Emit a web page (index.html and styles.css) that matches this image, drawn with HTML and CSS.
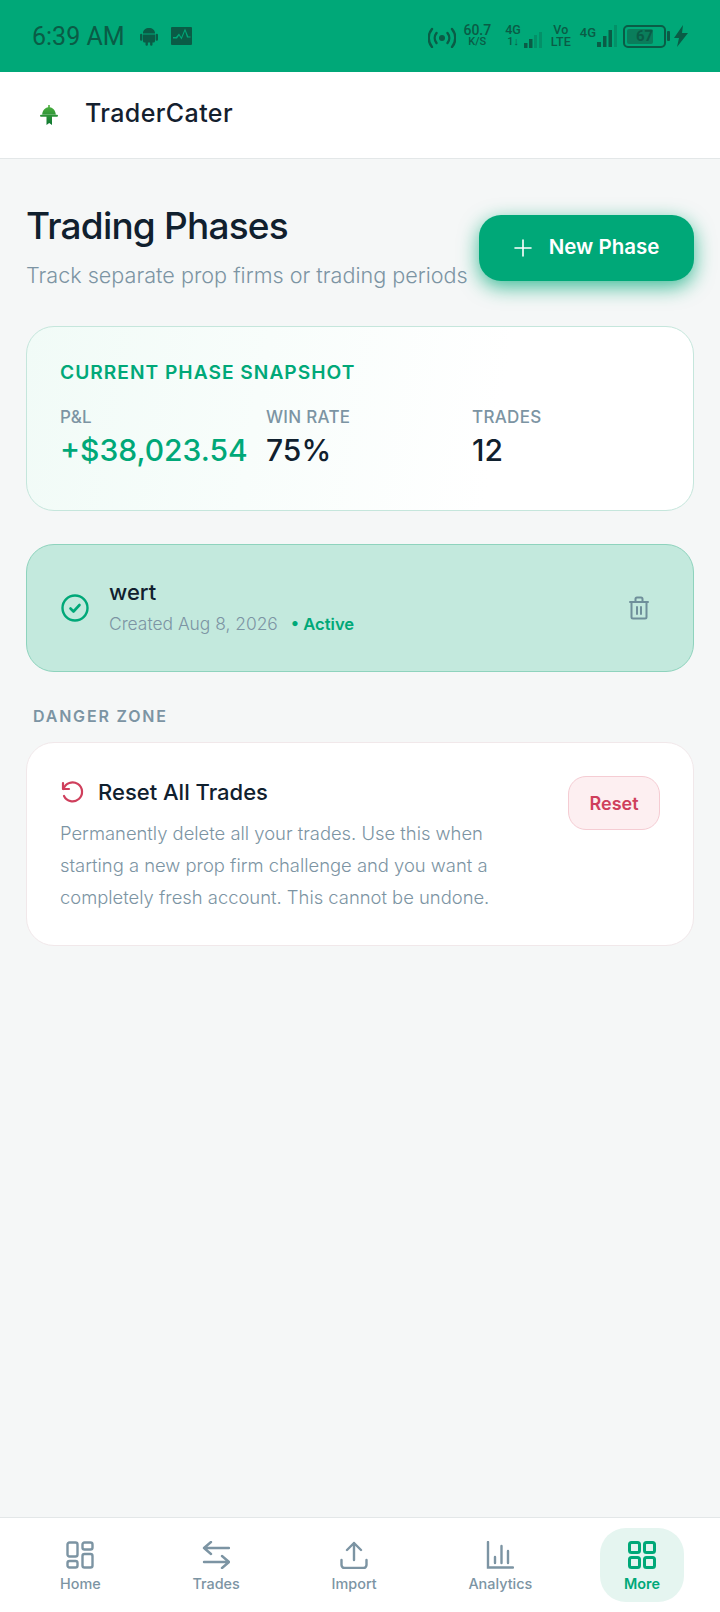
FILE: index.html
```html
<!DOCTYPE html>
<html lang="en">
<head>
    <meta charset="UTF-8">
    <meta name="viewport" content="width=device-width, initial-scale=1.0">
    <title>TraderCater - Trading Phases</title>
    <link rel="stylesheet" href="styles.css">
</head>
<body>

<div class="statusbar">
    <div class="status-left">
        <span class="clock">6:39 AM</span>
        <svg class="android" width="18" height="19" viewBox="0 0 18 19"><path fill="currentColor" d="M3 6C3 3 5.700 1 9 1s6 2 6 5v.5H3zM3 7.500h12v6.500c0 .8-.6 1.500-1.400 1.500H12.500v2a1.200 1.200 0 0 1-2.400 0v-2H7.900v2a1.200 1.200 0 0 1-2.400 0v-2H4.400C3.600 15.500 3 14.800 3 14zM0 8a1.200 1.200 0 0 1 2.400 0v4.500a1.200 1.200 0 0 1-2.400 0zM15.600 8a1.200 1.200 0 0 1 2.400 0v4.500a1.200 1.200 0 0 1-2.400 0z"/></svg>
        <svg class="pulse" width="21" height="18" viewBox="0 0 21 18"><path fill="currentColor" fill-rule="evenodd" d="M1 0h19a1 1 0 0 1 1 1v16a1 1 0 0 1-1 1H1a1 1 0 0 1-1-1V1a1 1 0 0 1 1-1zM2 11.500h4l2-3 2.500 4 3.500-8.500 2 6.500h3.500V9.500h-2.200L14 1.500l-3.700 8.800L8 6.500l-3 3.500H2z"/></svg>
    </div>
    <div class="status-right">
        <svg width="28" height="24" viewBox="0 0 28 24" fill="none" stroke="currentColor" stroke-width="2.400" stroke-linecap="round"><circle cx="14" cy="14" r="3" fill="currentColor" stroke="none"/><path d="M8.500 9a8 8 0 0 0 0 10M19.500 9a8 8 0 0 1 0 10M4 5a14 14 0 0 0 0 18M24 5a14 14 0 0 1 0 18"/></svg>
        <div class="stack speed"><span>60.7</span><span class="small">K/S</span></div>
        <div class="signal-group first">
            <div class="stack"><span>4G</span><span class="small">1↓</span></div>
            <svg width="18" height="16" viewBox="0 0 18 16"><g fill="currentColor"><rect x="0" y="11" width="3.500" height="5"/><rect x="5" y="7" width="3.500" height="9"/></g><g fill="currentColor" opacity=".3"><rect x="10" y="3" width="3" height="13"/><rect x="15" y="0" width="3" height="16"/></g></svg>
        </div>
        <div class="stack"><span>Vo</span><span>LTE</span></div>
        <div class="signal-group tight">
            <span class="four-g">4G</span>
            <svg width="20" height="22" viewBox="0 0 20 22"><g fill="currentColor"><rect x="0" y="17" width="4" height="5"/><rect x="6" y="11" width="3.500" height="11"/><rect x="11.500" y="5" width="3.500" height="17"/></g><rect x="17" y="0" width="3" height="22" fill="currentColor" opacity=".3"/></svg>
        </div>
        <div class="battery">
            <div class="battery-body"><span class="battery-fill"></span><span class="battery-num">67</span></div>
            <span class="battery-tip"></span>
        </div>
        <svg class="bolt" width="14" height="22" viewBox="0 0 14 22"><path fill="currentColor" d="M9 0 0 13h5l-2 9 11-14H8z"/></svg>
    </div>
</div>

<header class="topbar">
    <div class="logo">
        <svg width="18" height="20" viewBox="0 0 18 20">
            <defs><linearGradient id="bell" x1="0" y1="0" x2="0" y2="1"><stop offset="0" stop-color="#4fb33f"/><stop offset="1" stop-color="#0c7530"/></linearGradient></defs>
            <path fill="url(#bell)" d="M8.200 0h1.600v2.200C13 2.700 15.500 5.500 15.800 9.500H2.200C2.500 5.500 5 2.700 8.200 2.200zM1 9.800h16a1 1 0 0 1 0 2H12v8.200l-2.800-2L6.500 20v-8.200H1a1 1 0 0 1 0-2z"/>
        </svg>
    </div>
    <span class="brand">TraderCater</span>
</header>

<main class="content">
    <div class="page-head">
        <div>
            <h1>Trading Phases</h1>
            <p class="subtitle">Track separate prop firms or trading periods</p>
        </div>
        <button class="new-btn" type="button">
            <svg width="18" height="18" viewBox="0 0 18 18" fill="none" stroke="#fff" stroke-width="1.600" stroke-linecap="round"><path d="M9 1v16M1 9h16"/></svg>
            <span class="new-label">New Phase</span>
        </button>
    </div>

    <section class="snapshot">
        <h2>CURRENT PHASE SNAPSHOT</h2>
        <div class="stats">
            <div>
                <div class="stat-label">P&amp;L</div>
                <div class="stat-value green">+$38,023.54</div>
            </div>
            <div>
                <div class="stat-label">WIN RATE</div>
                <div class="stat-value">75%</div>
            </div>
            <div>
                <div class="stat-label">TRADES</div>
                <div class="stat-value">12</div>
            </div>
        </div>
    </section>

    <section class="phase">
        <svg width="28" height="28" viewBox="0 0 28 28" fill="none" stroke="#00a878" stroke-linecap="round" stroke-linejoin="round"><circle cx="14" cy="14" r="12.500" stroke-width="2.400"/><path d="M9.500 14.500l3 3 6-6.500" stroke-width="2.600"/></svg>
        <div class="phase-info">
            <div class="phase-name">wert</div>
            <div class="phase-meta">Created Aug 8, 2026 <span class="active">• Active</span></div>
        </div>
        <svg class="trash" width="20" height="24" viewBox="0 0 20 24" fill="none" stroke="#6f8f9a" stroke-width="2" stroke-linecap="round" stroke-linejoin="round"><path d="M1 6h18M6.500 6V3A1.500 1.500 0 0 1 8 1.500h4A1.500 1.500 0 0 1 13.500 3v3M2.500 6v15A1.500 1.500 0 0 0 4 22.500h12a1.500 1.500 0 0 0 1.500-1.500V6M8 11v7M12 11v7"/></svg>
    </section>

    <div class="section-label">DANGER ZONE</div>

    <section class="danger">
        <div class="danger-text">
            <div class="danger-title">
                <svg width="24" height="24" viewBox="0 0 24 24" fill="none" stroke="#cf3f5c" stroke-width="2.200" stroke-linecap="round" stroke-linejoin="round"><path d="M3 3v6h6"/><path d="M3.500 9A9.500 9.500 0 1 1 4 16"/></svg>
                <h3>Reset All Trades</h3>
            </div>
            <p>Permanently delete all your trades. Use this when starting a new prop firm challenge and you want a completely fresh account. This cannot be undone.</p>
        </div>
        <button class="reset-btn" type="button">Reset</button>
    </section>
</main>

<nav class="bottom-nav">
    <div class="nav-item">
        <svg width="28" height="28" viewBox="0 0 28 28" fill="none" stroke="currentColor" stroke-width="2.400" stroke-linejoin="round"><rect x="1.500" y="1.500" width="10" height="14" rx="2"/><rect x="16.500" y="1.500" width="10" height="7" rx="2"/><rect x="1.500" y="20" width="10" height="6.500" rx="2"/><rect x="16.500" y="13" width="10" height="13.500" rx="2"/></svg>
        <span>Home</span>
    </div>
    <div class="nav-item">
        <svg width="28" height="28" viewBox="0 0 28 28" fill="none" stroke="currentColor" stroke-width="2.400" stroke-linecap="round" stroke-linejoin="round"><path d="M27 7H2M9 1 2 7l7 6M2 21h25M20 15l7 6-7 6"/></svg>
        <span>Trades</span>
    </div>
    <div class="nav-item">
        <svg width="28" height="28" viewBox="0 0 28 28" fill="none" stroke="currentColor" stroke-width="2.400" stroke-linecap="round" stroke-linejoin="round"><path d="M14 19V2M7 9l7-7 7 7M1.500 19v5a3 3 0 0 0 3 3h19a3 3 0 0 0 3-3v-5"/></svg>
        <span>Import</span>
    </div>
    <div class="nav-item">
        <svg width="28" height="28" viewBox="0 0 28 28" fill="none" stroke="currentColor" stroke-width="2.400" stroke-linecap="round"><path d="M2 1v25.500h25M9 16v6M15.500 5v17M22 10v12"/></svg>
        <span>Analytics</span>
    </div>
    <div class="nav-item current">
        <svg width="28" height="28" viewBox="0 0 28 28" fill="none" stroke="currentColor" stroke-width="3" stroke-linejoin="round"><rect x="1.500" y="1.500" width="10" height="10" rx="2"/><rect x="16.500" y="1.500" width="10" height="10" rx="2"/><rect x="1.500" y="16.500" width="10" height="10" rx="2"/><rect x="16.500" y="16.500" width="10" height="10" rx="2"/></svg>
        <span>More</span>
    </div>
</nav>

</body>
</html>
```

FILE: styles.css
```css
* {
    box-sizing: border-box;
}

body {
    font-family: Inter, "Noto Sans", sans-serif;
    background-color: #f5f7f7;
    color: #10202e;
    margin: 0;
    width: 720px;
    height: 1612px;
    display: flex;
    flex-direction: column;
    overflow: hidden;
}

.statusbar {
    height: 72px;
    flex-shrink: 0;
    background-color: #00a878;
    color: #0a5c46;
    display: flex;
    justify-content: space-between;
    align-items: center;
    padding: 0 32px;
}

.status-left {
    display: flex;
    align-items: center;
    font-family: Roboto, sans-serif;
}

.clock {
    font-size: 25px;
    width: 108px;
}

.android {
    margin-right: 13px;
}

.status-right {
    display: flex;
    align-items: center;
    gap: 9px;
    font-family: Roboto, sans-serif;
    font-weight: 500;
}

.stack {
    display: flex;
    flex-direction: column;
    align-items: center;
    font-size: 12.500px;
    line-height: 12px;
}

.speed {
    margin-left: -2px;
    margin-right: 1px;
}

.speed span:first-child {
    font-size: 14px;
}

.small {
    font-size: 11px;
}

.signal-group {
    display: flex;
    align-items: flex-end;
    gap: 3px;
}

.signal-group.first {
    margin-left: 4px;
}

.signal-group.tight {
    gap: 1px;
}

.four-g {
    font-size: 13px;
    line-height: 16px;
    align-self: flex-start;
}

.battery {
    display: flex;
    align-items: center;
    gap: 1px;
    margin-left: -3px;
}

.battery-body {
    width: 43px;
    height: 23px;
    border: 2px solid currentColor;
    border-radius: 5px;
    display: flex;
    align-items: center;
    justify-content: center;
    position: relative;
}

.battery-fill {
    position: absolute;
    left: 2px;
    top: 2px;
    bottom: 2px;
    width: 26px;
    background-color: #0a7d5b;
    border-radius: 2px;
}

.battery-num {
    position: relative;
    font-size: 15px;
    font-weight: 700;
}

.battery-tip {
    width: 3px;
    height: 10px;
    background-color: currentColor;
    border-radius: 1px;
}

.bolt {
    margin-left: -5px;
}

.topbar {
    height: 87px;
    flex-shrink: 0;
    background-color: #fff;
    border-bottom: 1px solid #e3e7e8;
    display: flex;
    align-items: center;
    padding: 0 33px 0 40px;
}

.logo {
    width: 45px;
    display: flex;
}

.brand {
    font-size: 25px;
    line-height: 30px;
    font-weight: 500;
    letter-spacing: 0.4px;
    color: #14202e;
    margin-top: -4px;
}

.content {
    flex: 1;
    padding: 44px 26px 0;
}

.page-head {
    display: flex;
    justify-content: space-between;
    align-items: flex-start;
    margin-bottom: 37px;
}

h1 {
    font-size: 37px;
    line-height: 46px;
    font-weight: 500;
    letter-spacing: -0.8px;
    color: #10202e;
    margin: 0;
}

.subtitle {
    font-size: 21.600px;
    line-height: 28px;
    font-weight: 300;
    color: #7c94a3;
    margin: 12px 0 0;
    white-space: nowrap;
}

.new-btn {
    width: 215px;
    height: 66px;
    margin-top: 12px;
    background-color: #00a878;
    color: #fff;
    border: none;
    border-radius: 22px;
    font-family: inherit;
    font-size: 20.500px;
    font-weight: 600;
    display: flex;
    align-items: center;
    justify-content: center;
    gap: 17px;
    box-shadow: 0 6px 20px rgba(0, 168, 120, 0.75);
}

.new-label {
    margin-top: -3px;
}

.snapshot {
    height: 185px;
    border: 1px solid #c5e6dc;
    border-radius: 28px;
    background: linear-gradient(100deg, #f1fbf7, #fff 70%);
    padding: 33px 33px 0;
    margin-bottom: 33px;
}

h2 {
    font-size: 19.200px;
    line-height: 24px;
    font-weight: 600;
    letter-spacing: 1px;
    color: #00a878;
    margin: 0 0 22px;
}

.stats {
    display: grid;
    grid-template-columns: repeat(3, 188px);
    column-gap: 18px;
}

.stat-label {
    font-size: 17px;
    line-height: 22px;
    font-weight: 500;
    letter-spacing: 0.3px;
    color: #7c94a3;
}

.stat-value {
    font-size: 30px;
    line-height: 40px;
    font-weight: 500;
    color: #10202e;
    margin-top: 2px;
    white-space: nowrap;
}

.stat-value.green {
    color: #00a878;
}

.phase {
    height: 128px;
    border: 1px solid #8ed3bd;
    border-radius: 28px;
    background-color: #c3e9dd;
    display: flex;
    align-items: center;
    padding: 0 44px 0 34px;
    margin-bottom: 33px;
}

.phase-info {
    flex: 1;
    margin-left: 20px;
}

.phase-name {
    font-size: 22px;
    line-height: 30px;
    font-weight: 500;
    color: #10202e;
    margin-top: -4px;
    margin-bottom: 5px;
}

.phase-meta {
    font-size: 17.400px;
    line-height: 24px;
    font-weight: 300;
    color: #7c94a3;
}

.active {
    color: #00a878;
    font-size: 16.600px;
    font-weight: 600;
    margin-left: 8px;
}

.section-label {
    font-size: 16px;
    line-height: 22px;
    font-weight: 600;
    letter-spacing: 1.800px;
    color: #7c94a3;
    padding-left: 7px;
    margin-bottom: 15px;
}

.danger {
    height: 204px;
    border: 1px solid #f1e8ea;
    border-radius: 28px;
    background-color: #fff;
    display: flex;
    justify-content: space-between;
    align-items: flex-start;
    padding: 33px 33px 0;
}

.danger-text {
    width: 450px;
}

.danger-title {
    display: flex;
    align-items: center;
    gap: 14px;
}

h3 {
    font-size: 22px;
    line-height: 32px;
    font-weight: 500;
    color: #10202e;
    margin: 0;
}

.danger-text p {
    font-size: 18.400px;
    line-height: 32px;
    font-weight: 300;
    color: #7c94a3;
    margin: 9px 0 0;
}

.reset-btn {
    width: 92px;
    height: 54px;
    border: 1px solid #f5ccd3;
    border-radius: 18px;
    background-color: #fdeff1;
    color: #cf3f5c;
    font-family: inherit;
    font-size: 18px;
    font-weight: 600;
}

.bottom-nav {
    height: 95px;
    flex-shrink: 0;
    background-color: #fff;
    border-top: 1px solid #e3e7e8;
    display: flex;
    justify-content: space-between;
    align-items: flex-start;
    padding: 10px 36px 0;
}

.nav-item {
    display: flex;
    flex-direction: column;
    align-items: center;
    padding: 13px 24px 8px;
    border-radius: 26px;
    color: #7c94a3;
    font-size: 14.400px;
    line-height: 20px;
    font-weight: 500;
    gap: 5px;
}

.nav-item.current {
    background-color: #e5f5f0;
    color: #00a878;
    font-weight: 600;
}
```
